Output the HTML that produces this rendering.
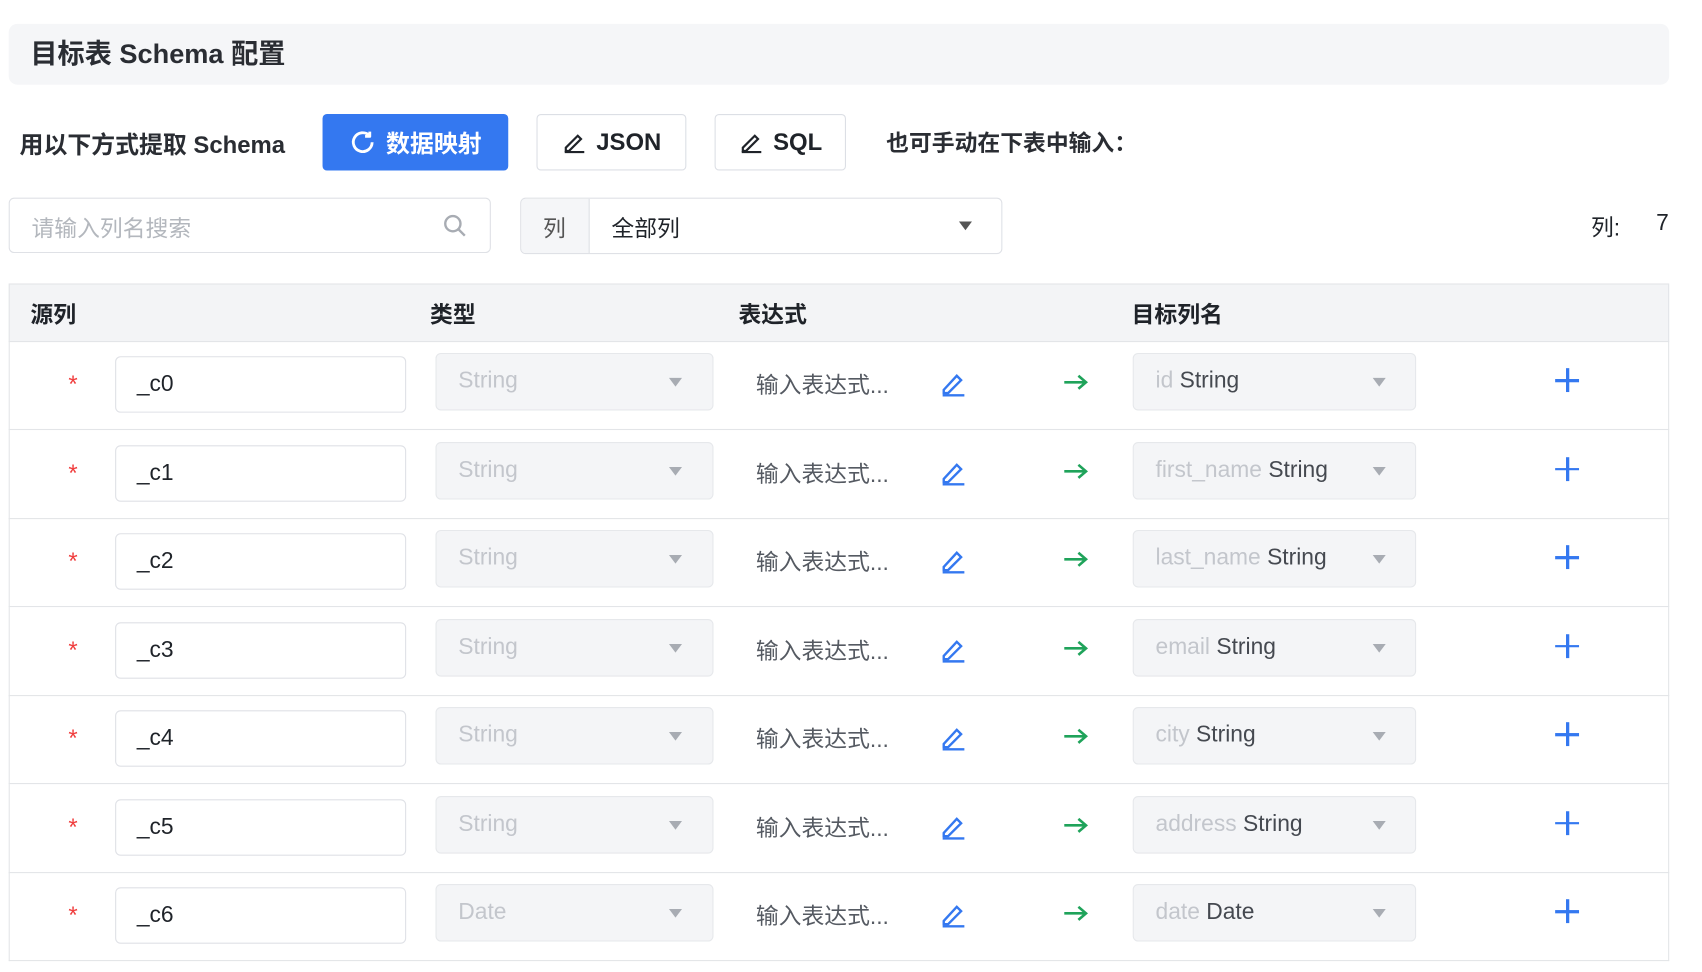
<!DOCTYPE html>
<html><head><meta charset="utf-8"><style>
html,body{margin:0;padding:0;background:#fff;width:1702px;height:972px;overflow:hidden}
#w{position:absolute;left:0;top:0;width:1545px;height:895px;transform-origin:0 0;transform:scale(1.086,1.086);font-family:"Liberation Sans","Noto Sans CJK SC",sans-serif;color:#1f2329}
.a{position:absolute}
.hdr{left:8px;top:22px;width:1529px;height:56px;background:#f5f6f8;border-radius:8px}
.t{font-size:25px;line-height:56px;left:20px;top:0;font-weight:bold;white-space:nowrap;color:#2a2d33}
.btn{border:1px solid #dcdfe5;border-radius:4px;height:50px;box-sizing:border-box;display:flex;align-items:center;justify-content:center;font-size:22px;gap:8px;background:#fff;font-weight:bold}
.txt{font-size:21px;white-space:nowrap}
.inp{border:1px solid #dfe1e6;border-radius:5px;box-sizing:border-box;background:#fff}
.sel{background:#f4f5f7;border:1px solid #e6e8eb;border-radius:5px;box-sizing:border-box}
.car{width:0;height:0;border-left:6px solid transparent;border-right:6px solid transparent;border-top:8px solid #a8acb3}
.row{left:8px;width:1529px;height:81px;border-bottom:1px solid #e3e5e8;border-left:1px solid #e3e5e8;border-right:1px solid #e3e5e8;box-sizing:border-box}
</style></head><body><div id="w">
<div class="a hdr"><div class="a t">目标表 Schema 配置</div></div>
<div class="a txt" style="left:18px;top:116px;font-size:22px;font-weight:bold;color:#2a2d33">用以下方式提取 Schema</div>
<div class="a btn" style="left:297px;top:105px;width:171px;height:52px;background:#3478f0;border-color:#3478f0;color:#fff">
<svg width="26" height="26" viewBox="0 0 24 24" fill="none" stroke="#fff" stroke-width="2.4"><path d="M20 12a8 8 0 1 1-2.3-5.7"/><path d="M18 3v4h-4" stroke-linejoin="round"/></svg>数据映射</div>
<div class="a btn" style="left:494px;top:105px;width:138px;height:52px"><svg width="24" height="24" viewBox="0 0 24 24" fill="none" stroke="#1f2329" stroke-width="2"><path d="M4 17l11-11 3 3-11 11H4z"/><path d="M3 21h18"/></svg>JSON</div>
<div class="a btn" style="left:658px;top:105px;width:121px;height:52px"><svg width="24" height="24" viewBox="0 0 24 24" fill="none" stroke="#1f2329" stroke-width="2"><path d="M4 17l11-11 3 3-11 11H4z"/><path d="M3 21h18"/></svg>SQL</div>
<div class="a txt" style="left:816px;top:116px;font-size:21px;font-weight:bold;color:#2a2d33">也可手动在下表中输入：</div>
<div class="a inp" style="left:8px;top:182px;width:444px;height:51px"><div class="a txt" style="left:20px;top:12px;color:#b3b7bd">请输入列名搜索</div>
<svg class="a" style="left:398px;top:13px" width="24" height="24" viewBox="0 0 24 24" fill="none" stroke="#a8acb3" stroke-width="2.2"><circle cx="10" cy="10" r="7"/><path d="M15 15l6 6"/></svg></div>
<div class="a inp" style="left:479px;top:182px;width:444px;height:52px;overflow:hidden"><div class="a" style="left:0;top:0;width:62px;height:52px;background:#f5f6f8;border-right:1px solid #dfe1e6"></div><div class="a txt" style="left:20px;top:12px;color:#555">列</div><div class="a txt" style="left:83px;top:12px">全部列</div><div class="a car" style="left:403px;top:21px;border-top-color:#555"></div></div>
<div class="a txt" style="left:1465px;top:194px">列:</div><div class="a txt" style="left:1525px;top:194px">7</div>
<div class="a" style="left:8px;top:261px;width:1529px;height:54px;background:#f3f4f6;border:1px solid #e3e5e8;box-sizing:border-box"></div>
<div class="a txt" style="left:28px;top:274px;font-weight:bold">源列</div>
<div class="a txt" style="left:396px;top:274px;font-weight:bold">类型</div>
<div class="a txt" style="left:680px;top:274px;font-weight:bold">表达式</div>
<div class="a txt" style="left:1042px;top:274px;font-weight:bold">目标列名</div>
<div id="rows"></div>
</div>
<script>
var d=[["_c0","String","id","String"],["_c1","String","first_name","String"],["_c2","String","last_name","String"],["_c3","String","email","String"],["_c4","String","city","String"],["_c5","String","address","String"],["_c6","Date","date","Date"]];
var h="";
d.forEach(function(r,i){var y=314+81.5*i;
h+='<div class="a row" style="top:'+y+'px;height:82px"></div>'+
'<div class="a" style="left:63px;top:'+(y+27)+'px;color:#f03e3e;font-size:22px">*</div>'+
'<div class="a inp" style="left:106px;top:'+(y+14)+'px;width:268px;height:52px"><div class="a txt" style="left:19px;top:13px">'+r[0]+'</div></div>'+
'<div class="a sel" style="left:401px;top:'+(y+11)+'px;width:256px;height:53px"><div class="a txt" style="left:20px;top:13px;color:#c3c6cc">'+r[1]+'</div><div class="a car" style="left:214px;top:22px"></div></div>'+
'<div class="a txt" style="left:696px;top:'+(y+25)+'px;color:#555a62">输入表达式...</div>'+
'<svg class="a" style="left:866px;top:'+(y+26)+'px" width="24" height="26" viewBox="0 0 24 26" fill="none" stroke="#3478f0" stroke-width="2.2"><path d="M3 19l12-13 4 4-12 12H3z"/><path d="M2 24h20"/></svg>'+
'<svg class="a" style="left:979px;top:'+(y+30)+'px" width="24" height="16" viewBox="0 0 24 16" fill="none" stroke="#1fa35a" stroke-width="2.4"><path d="M1 8h20M14 2l7 6-7 6"/></svg>'+
'<div class="a sel" style="left:1043px;top:'+(y+11)+'px;width:261px;height:53px"><div class="a txt" style="left:20px;top:13px"><span style="color:#c3c6cc">'+r[2]+'</span> <span style="color:#454950">'+r[3]+'</span></div><div class="a car" style="left:220px;top:22px"></div></div>'+
'<div class="a" style="left:1432px;top:'+(y+25)+'px;width:22px;height:22px"><div class="a" style="left:10px;top:0;width:2.5px;height:22px;background:#3478f0"></div><div class="a" style="left:0;top:10px;width:22px;height:2.5px;background:#3478f0"></div></div>';});
document.getElementById("rows").outerHTML=h;
</script>
</body></html>
